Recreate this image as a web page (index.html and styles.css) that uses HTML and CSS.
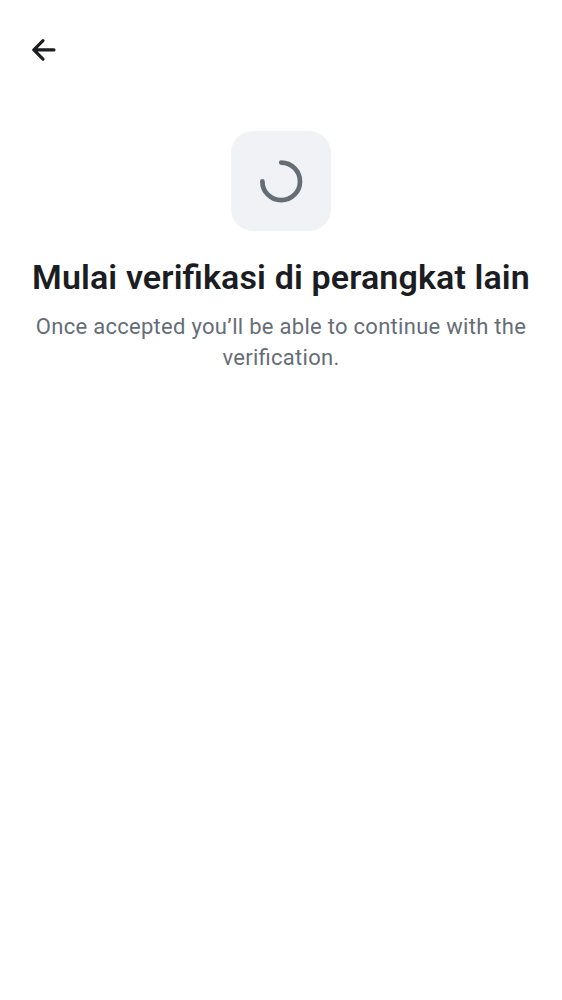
FILE: index.html
```html
<!DOCTYPE html>
<html lang="id">
<head>
<meta charset="utf-8">
<meta name="viewport" content="width=device-width">
<title>Verifikasi</title>
<link rel="stylesheet" href="styles.css">
</head>
<body>
<header class="topbar">
<button class="back" aria-label="Kembali"><svg width="24" height="24" viewBox="0 0 24 24"><path d="M22 11.9H2M11 2.6 1.8 11.9l9.2 9.3"/></svg></button>
</header>
<main class="content">
<div class="tile"><svg width="44" height="44" viewBox="0 0 44 44"><path d="M22.2 3.6A18.8 18.8 0 1 1 3.4 22.4"/></svg></div>
<h1 class="title">Mulai verifikasi di perangkat lain</h1>
<p class="subtitle">Once accepted you’ll be able to continue with the verification.</p>
</main>
</body>
</html>
```
FILE: styles.css
```css
body {
  margin: 0;
  min-height: 1000px;
  background: #fff;
  font-family: Roboto, sans-serif;
  text-align: center;
}
.topbar {
  display: flex;
  align-items: center;
  height: 100px;
  padding-left: 32px;
}
.back {
  display: flex;
  padding: 0;
  border: 0;
  background: none;
}
svg {
  fill: none;
  stroke-linecap: round;
  stroke-linejoin: round;
}
.back svg {
  stroke: #1b1d22;
  stroke-width: 3.1;
}
.content {
  display: flex;
  flex-direction: column;
  align-items: center;
  padding: 31px 25px 0;
}
.tile {
  display: flex;
  align-items: center;
  justify-content: center;
  width: 100px;
  height: 100px;
  border-radius: 22px;
  background: #f0f2f5;
}
.tile svg {
  stroke: #656d77;
  stroke-width: 4.7;
}
.title {
  margin: 24px 0 0;
  color: #1b1d22;
  font-size: 34px;
  font-weight: 600;
  line-height: 44px;
  letter-spacing: 0.13px;
  font-feature-settings: "liga" 1;
  white-space: nowrap;
}
.subtitle {
  margin: 12px 0 0;
  color: #656d77;
  font-size: 22px;
  line-height: 31px;
  letter-spacing: 0.28px;
  font-feature-settings: "liga" 1;
}
```
